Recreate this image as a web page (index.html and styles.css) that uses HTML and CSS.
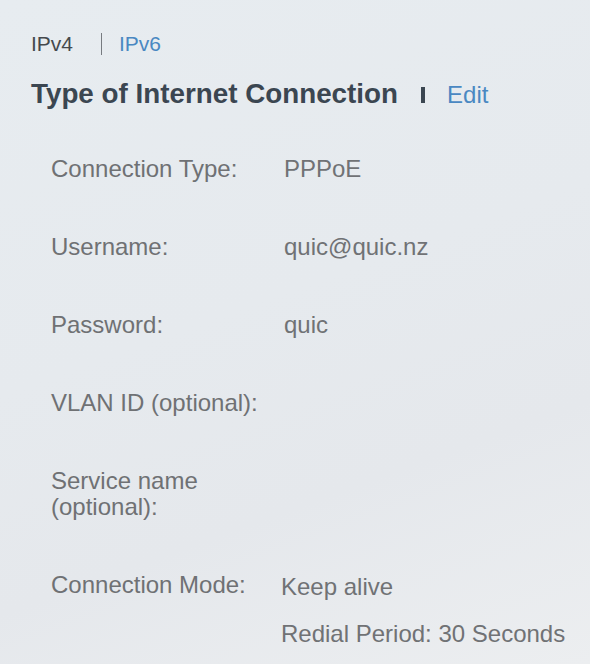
FILE: index.html
```html
<!DOCTYPE html>
<html>
<head>
<meta charset="utf-8">
<link rel="stylesheet" href="styles.css">
</head>
<body>
<main class="page">
  <nav class="tabs">
    <span class="tab">IPv4</span>
    <span class="tab-sep"></span>
    <a class="tab tab-link">IPv6</a>
  </nav>
  <header class="title-row">
    <h1 class="title">Type of Internet Connection</h1>
    <span class="title-sep"></span>
    <a class="edit">Edit</a>
  </header>
  <dl class="info">
    <div class="row">
      <dt class="label">Connection Type:</dt>
      <dd class="value">PPPoE</dd>
    </div>
    <div class="row">
      <dt class="label">Username:</dt>
      <dd class="value">quic@quic.nz</dd>
    </div>
    <div class="row">
      <dt class="label">Password:</dt>
      <dd class="value">quic</dd>
    </div>
    <div class="row">
      <dt class="label">VLAN ID (optional):</dt>
      <dd class="value"></dd>
    </div>
    <div class="row">
      <dt class="label">Service name<br>(optional):</dt>
      <dd class="value"></dd>
    </div>
    <div class="row">
      <dt class="label">Connection Mode:</dt>
      <dd class="value value-mode">
        <span class="mode">Keep alive</span>
        <span class="redial">Redial Period: 30 Seconds</span>
      </dd>
    </div>
  </dl>
</main>
</body>
</html>
```

FILE: styles.css
```css
html, body {
  margin: 0;
  padding: 0;
}
body {
  width: 590px;
  height: 664px;
  overflow: hidden;
  background: linear-gradient(160deg, #e7ecf0 0%, #e6eaee 45%, #e5e8ec 70%, #eceef0 100%);
  font-family: "Liberation Sans", Arial, Helvetica, sans-serif;
  color: #707275;
}
.page {
  padding: 32px 0 0 31px;
}
.tabs {
  display: flex;
  align-items: center;
  height: 24px;
  font-size: 21px;
  line-height: 24px;
}
.tab {
  color: #45494d;
}
.tab-sep {
  width: 1px;
  height: 22px;
  background: #777b80;
  margin: 0 17px 0 28px;
}
.tab-link {
  color: #4a88c2;
}
.title-row {
  display: flex;
  align-items: center;
  margin-top: 22px;
  height: 32px;
}
.title {
  margin: 0;
  font-size: 27.8px;
  line-height: 32px;
  font-weight: bold;
  color: #3b4651;
}
.title-sep {
  width: 4px;
  height: 16px;
  background: #3b4651;
  margin: 2px 22px 0 23px;
}
.edit {
  font-size: 24px;
  line-height: 32px;
  color: #4a88c2;
  margin-top: 2px;
}
.info {
  margin: 46px 0 0 20px;
  display: flex;
  flex-direction: column;
  gap: 52px;
  font-size: 24px;
  line-height: 26px;
}
.row {
  display: flex;
}
.label {
  width: 233px;
  flex: none;
  margin: 0;
  color: #6f7174;
}
.value {
  margin: 0;
  color: #707275;
}
.value-mode {
  margin-left: -3px;
  padding-top: 2px;
  display: flex;
  flex-direction: column;
  gap: 21px;
}
```
